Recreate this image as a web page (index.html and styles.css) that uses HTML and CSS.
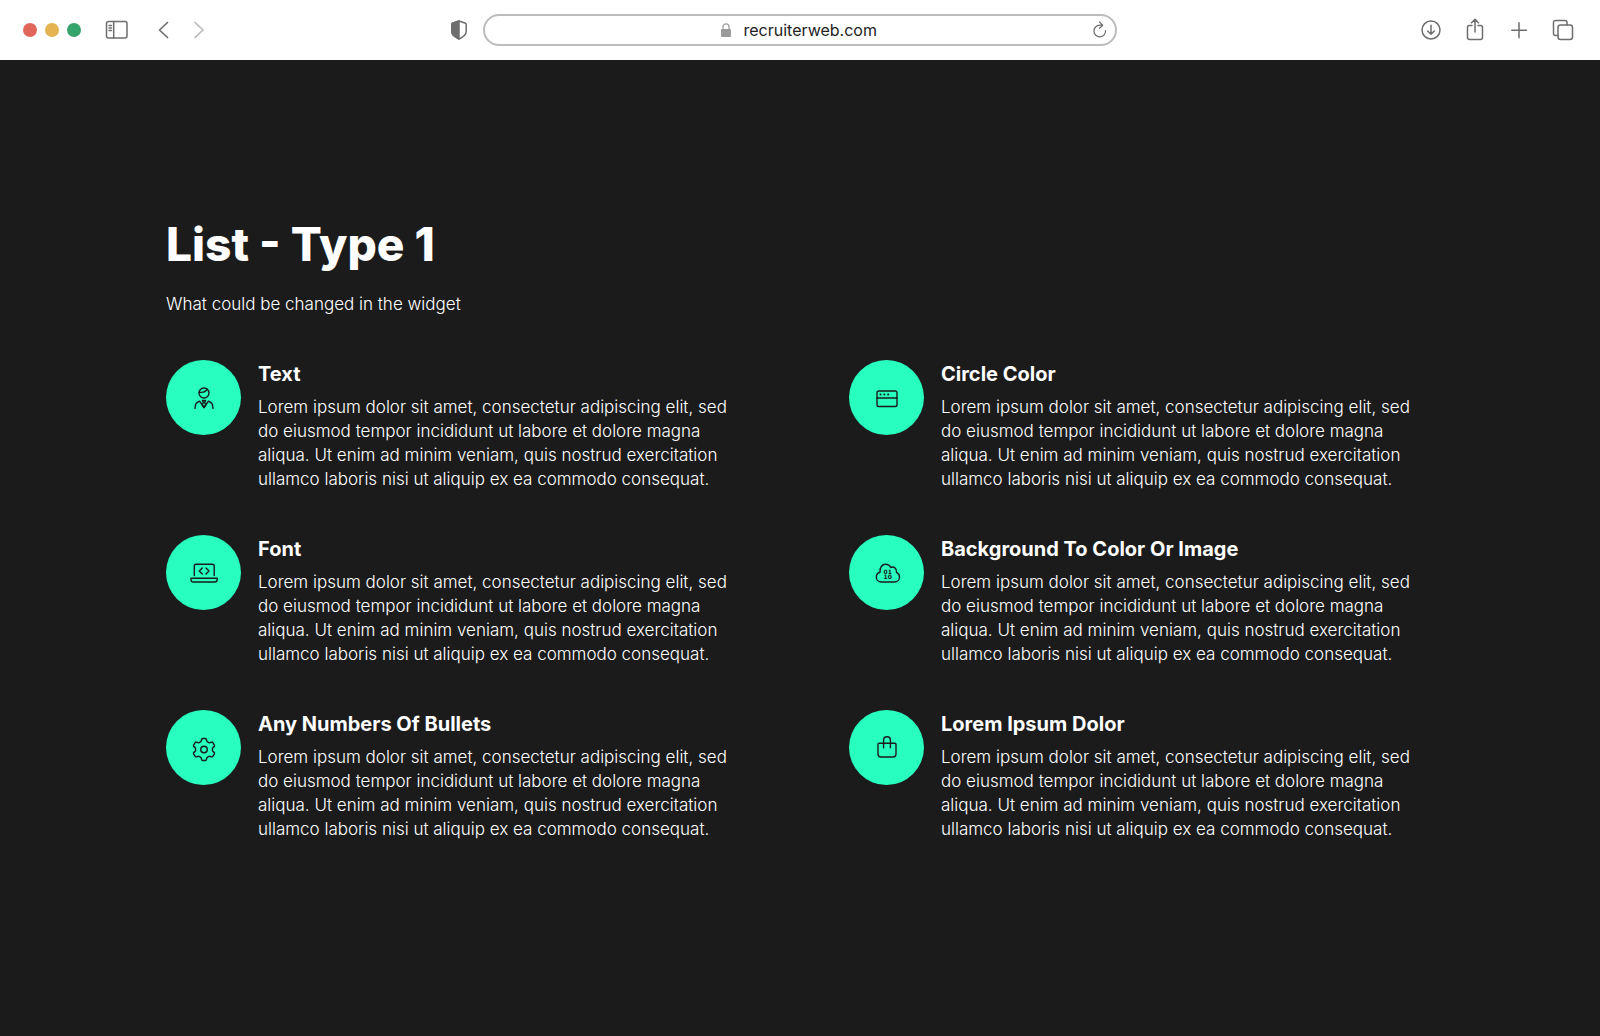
FILE: index.html
```html
<!DOCTYPE html>
<html lang="en">
<head>
    <meta charset="UTF-8">
    <meta name="viewport" content="width=device-width, initial-scale=1.0">
    <title>List - Type 1</title>
    <link rel="stylesheet" href="styles.css">
</head>
<body>

    <!-- Browser toolbar -->
    <header class="toolbar">
        <div class="toolbar-left">
            <div class="dots">
                <span class="dot red"></span>
                <span class="dot yellow"></span>
                <span class="dot green"></span>
            </div>
            <button class="tool sidebar" aria-label="Sidebar">
                <svg viewBox="0 0 24 24"><rect x="1.500" y="3.500" width="20.500" height="16.500" rx="2"/><path d="M8.700 3.500V20M4 7.500h2.500M4 10h2.500M4 12.500h2.500"/></svg>
            </button>
            <div class="history">
                <button class="tool" aria-label="Back">
                    <svg viewBox="0 0 24 24"><path d="M15.500 4.500 7.500 12l8 7.500" stroke-width="1.700"/></svg>
                </button>
                <button class="tool forward" aria-label="Forward">
                    <svg viewBox="0 0 24 24"><path d="m8 4.500 8 7.500-8 7.500" stroke-width="1.700"/></svg>
                </button>
            </div>
            <button class="tool shield" aria-label="Privacy report">
                <svg viewBox="0 0 24 24"><path d="M12 3 5.500 5.200Q4.800 5.500 4.800 6.300v7.200c0 3.500 3.500 5.800 7.200 7.500 3.700-1.700 7.200-4 7.200-7.500V6.300q0-.8-.7-1.100Z"/><path d="M12 3 5.500 5.200Q4.800 5.500 4.800 6.300v7.200c0 3.500 3.500 5.800 7.200 7.500Z" fill="currentColor"/></svg>
            </button>
        </div>

        <div class="address">
            <svg class="lock" viewBox="0 0 10 14"><rect x="0" y="6" width="10" height="8" rx="1" fill="currentColor"/><path d="M2 6.500V3.800a3 3 0 0 1 6 0v2.700" fill="none" stroke="currentColor" stroke-width="1.200"/></svg>
            <input class="url" type="text" value="recruiterweb.com" aria-label="Address">
            <button class="tool reload" aria-label="Reload">
                <svg viewBox="0 0 24 24"><path d="M17.500 12.500a5.800 5.800 0 1 1-5.800-5.300h2.600M11.500 4l3.200 3.200-3.200 3.100" stroke-width="1.200"/></svg>
            </button>
        </div>

        <div class="toolbar-right">
            <button class="tool" aria-label="Downloads">
                <svg viewBox="0 0 24 24"><circle cx="12" cy="12" r="9"/><path d="M12 7.200v9M8.700 13l3.300 3.300 3.300-3.300"/></svg>
            </button>
            <button class="tool" aria-label="Share">
                <svg viewBox="0 0 24 24"><path d="M9 7.500H6.500a2 2 0 0 0-2 2v10a2 2 0 0 0 2 2h11a2 2 0 0 0 2-2v-10a2 2 0 0 0-2-2H15M12 14V1.500M8.500 4.700 12 1.300l3.500 3.400"/></svg>
            </button>
            <button class="tool" aria-label="New tab">
                <svg viewBox="0 0 24 24"><path d="M12 4.800v14.900M4.800 12.200h14.600"/></svg>
            </button>
            <button class="tool" aria-label="Tabs">
                <svg viewBox="0 0 24 24"><path d="M7 17.500H4.500a2 2 0 0 1-2-2v-11a2 2 0 0 1 2-2h9.500a2 2 0 0 1 2 2V7"/><rect x="7" y="7" width="14.500" height="14.500" rx="2.500"/></svg>
            </button>
        </div>
    </header>

    <!-- List widget -->
    <main class="widget">
        <h1>List - Type 1</h1>
        <p class="subtitle">What could be changed in the widget</p>

        <ul class="list">
            <li class="item">
                <div class="circle">
                    <svg viewBox="0 0 32 32"><circle cx="16" cy="11" r="5"/><path d="M11.200 10.200c3.600.6 6.600-.4 8-3"/><path d="M7 26.500c0-4 1.200-6.600 4.600-7.300L16 25.500l4.400-6.300c3.400.7 4.600 3.300 4.600 7.300"/><path d="M14.500 18.500h3l-.8 2 1 2.600-1.700 2.400-1.700-2.400 1-2.600Z"/></svg>
                </div>
                <div class="item-text">
                    <h2>Text</h2>
                    <p>Lorem ipsum dolor sit amet, consectetur adipiscing elit, sed do eiusmod tempor incididunt ut labore et dolore magna aliqua. Ut enim ad minim veniam, quis nostrud exercitation ullamco laboris nisi ut aliquip ex ea commodo consequat.</p>
                </div>
            </li>
            <li class="item">
                <div class="circle">
                    <svg viewBox="0 0 32 32"><rect x="6" y="9" width="20" height="15.500" rx="1.800"/><path d="M6 16h20"/><g class="solid"><circle cx="9.500" cy="12.500" r="1"/><circle cx="13.300" cy="12.500" r="1"/><circle cx="17.200" cy="12.500" r="1"/></g></svg>
                </div>
                <div class="item-text">
                    <h2>Circle Color</h2>
                    <p>Lorem ipsum dolor sit amet, consectetur adipiscing elit, sed do eiusmod tempor incididunt ut labore et dolore magna aliqua. Ut enim ad minim veniam, quis nostrud exercitation ullamco laboris nisi ut aliquip ex ea commodo consequat.</p>
                </div>
            </li>
            <li class="item">
                <div class="circle">
                    <svg viewBox="0 0 32 32"><path d="M6.300 18.500V9q0-1.800 1.800-1.800h16.300q1.800 0 1.800 1.800v9.500"/><path d="M3 21.200h26.200v1.300q0 2.500-2.500 2.500H5.500Q3 25 3 22.500Z"/><path d="m14.300 11-3 3 3 3M18 11l3 3-3 3"/></svg>
                </div>
                <div class="item-text">
                    <h2>Font</h2>
                    <p>Lorem ipsum dolor sit amet, consectetur adipiscing elit, sed do eiusmod tempor incididunt ut labore et dolore magna aliqua. Ut enim ad minim veniam, quis nostrud exercitation ullamco laboris nisi ut aliquip ex ea commodo consequat.</p>
                </div>
            </li>
            <li class="item">
                <div class="circle">
                    <svg viewBox="0 0 32 32"><path d="M10.500 25C7.500 25 5.300 22.800 5.300 20c0-2.300 1.500-4.200 3.700-4.800C8.600 10.500 11 7.300 14.500 7.300c2.500 0 4.300 1.200 5.200 3.200 3-1.300 6.300.6 5.800 4.800 1.800.8 3 2.500 3 4.700 0 2.800-2.200 5-5 5Z"/><text x="12.500" y="16.700">01</text><text x="12.500" y="22.200">10</text></svg>
                </div>
                <div class="item-text">
                    <h2>Background To Color Or Image</h2>
                    <p>Lorem ipsum dolor sit amet, consectetur adipiscing elit, sed do eiusmod tempor incididunt ut labore et dolore magna aliqua. Ut enim ad minim veniam, quis nostrud exercitation ullamco laboris nisi ut aliquip ex ea commodo consequat.</p>
                </div>
            </li>
            <li class="item">
                <div class="circle">
                    <svg viewBox="-16 -17.500 32 32"><path d="M-1.300-11H1.300Q2.300-11 2.400-10L2.700-8.600Q3-8 3.600-7.600L4.900-6.900Q5.400-6.600 6-6.800L7.600-7.400Q8.500-7.600 9-6.700L10.400-4.300Q10.800-3.500 10.100-2.900L8.900-1.900Q8.400-1.400 8.400-.8V.8Q8.400 1.400 8.900 1.900L10.100 2.900Q10.800 3.500 10.400 4.300L9 6.700Q8.500 7.600 7.600 7.400L6 6.800Q5.400 6.600 4.900 6.900L3.600 7.600Q3 8 2.700 8.600L2.400 10Q2.300 11 1.300 11H-1.300Q-2.300 11-2.400 10L-2.700 8.600Q-3 8-3.600 7.600L-4.900 6.900Q-5.400 6.600-6 6.800L-7.600 7.400Q-8.500 7.600-9 6.700L-10.400 4.300Q-10.800 3.500-10.100 2.900L-8.900 1.900Q-8.400 1.400-8.400.8V-.8Q-8.400-1.400-8.900-1.900L-10.100-2.900Q-10.800-3.500-10.400-4.300L-9-6.700Q-8.500-7.600-7.600-7.400L-6-6.800Q-5.400-6.600-4.900-6.900L-3.600-7.600Q-3-8-2.700-8.600L-2.400-10Q-2.300-11-1.300-11Z"/><circle r="3.300"/></svg>
                </div>
                <div class="item-text">
                    <h2>Any Numbers Of Bullets</h2>
                    <p>Lorem ipsum dolor sit amet, consectetur adipiscing elit, sed do eiusmod tempor incididunt ut labore et dolore magna aliqua. Ut enim ad minim veniam, quis nostrud exercitation ullamco laboris nisi ut aliquip ex ea commodo consequat.</p>
                </div>
            </li>
            <li class="item">
                <div class="circle">
                    <svg viewBox="0 0 32 32"><path d="M8.200 11.300h15.600q1.200 0 1.200 1.200V22q0 3-3 3H10q-3 0-3-3v-9.500q0-1.200 1.200-1.200Z"/><path d="M12.600 15.700V8.200a3.400 3.400 0 0 1 6.800 0v7.500"/></svg>
                </div>
                <div class="item-text">
                    <h2>Lorem Ipsum Dolor</h2>
                    <p>Lorem ipsum dolor sit amet, consectetur adipiscing elit, sed do eiusmod tempor incididunt ut labore et dolore magna aliqua. Ut enim ad minim veniam, quis nostrud exercitation ullamco laboris nisi ut aliquip ex ea commodo consequat.</p>
                </div>
            </li>
        </ul>
    </main>

</body>
</html>
```

FILE: styles.css
```css
* {
    box-sizing: border-box;
}

body {
    margin: 0;
    min-height: 100vh;
    background-color: #1b1b1b;
    color: white;
    font-family: Inter, Arial, sans-serif;
}

/* Browser toolbar */
.toolbar {
    display: grid;
    grid-template-columns: 1fr 634px 1fr;
    align-items: center;
    height: 60px;
    background-color: white;
    color: #6e6e6e;
}

.toolbar-left {
    display: flex;
    align-items: center;
    padding: 0 12px 0 23px;
}

.toolbar-right {
    display: flex;
    justify-content: flex-end;
    gap: 20px;
    padding-right: 25px;
}

.dots {
    display: flex;
    gap: 8px;
}

.dot {
    width: 14px;
    height: 14px;
    border-radius: 50%;
}

.red {
    background-color: #e0665b;
}

.yellow {
    background-color: #e6b352;
}

.green {
    background-color: #35a36c;
}

.tool {
    width: 24px;
    height: 24px;
    padding: 0;
    border: none;
    background: none;
    color: inherit;
}

.tool svg {
    display: block;
    width: 24px;
    height: 24px;
    fill: none;
    stroke: currentColor;
    stroke-width: 1.5;
    stroke-linecap: round;
    stroke-linejoin: round;
}

.sidebar {
    margin-left: 24px;
}

.history {
    display: flex;
    gap: 11px;
    margin-left: 23px;
}

.forward {
    color: #b9b9b9;
}

.shield {
    margin-left: auto;
}

/* Address bar */
.address {
    position: relative;
    display: flex;
    align-items: center;
    justify-content: center;
    gap: 13px;
    height: 32px;
    border: 2px solid #bcbcbc;
    border-radius: 16px;
}

.lock {
    width: 10px;
    height: 14px;
    color: #9a9a9a;
}

.url {
    width: 136px;
    padding: 0;
    border: none;
    outline: none;
    background: none;
    color: #222;
    font-family: inherit;
    font-size: 16px;
}

.reload {
    position: absolute;
    right: 3px;
}

/* List widget */
.widget {
    padding: 156px 166px;
}

h1 {
    margin: 0 0 20px;
    font-size: 46px;
    line-height: 56px;
    font-weight: 800;
}

.subtitle {
    margin: 0 0 44px;
    font-size: 17px;
    line-height: 24px;
    font-weight: 300;
}

.list {
    display: grid;
    grid-template-columns: 1fr 1fr;
    gap: 44px 98px;
    margin: 0;
    padding: 0;
    list-style: none;
}

.item {
    display: flex;
    gap: 17px;
    padding-right: 16px;
}

.circle {
    display: flex;
    flex-shrink: 0;
    align-items: center;
    justify-content: center;
    width: 75px;
    height: 75px;
    border-radius: 50%;
    background-color: #28ffbf;
}

.circle svg {
    width: 32px;
    height: 32px;
    fill: none;
    stroke: #1b1b1b;
    stroke-width: 1.4;
    stroke-linecap: round;
    stroke-linejoin: round;
}

.circle .solid,
.circle text {
    fill: #1b1b1b;
    stroke: none;
}

.circle text {
    font-family: "DejaVu Sans", sans-serif;
    font-size: 6px;
    font-weight: 700;
}

.item h2 {
    margin: 0 0 7px;
    font-size: 20px;
    line-height: 28px;
    font-weight: 700;
}

.item p {
    margin: 0;
    font-size: 17px;
    line-height: 24px;
    font-weight: 300;
}
```
